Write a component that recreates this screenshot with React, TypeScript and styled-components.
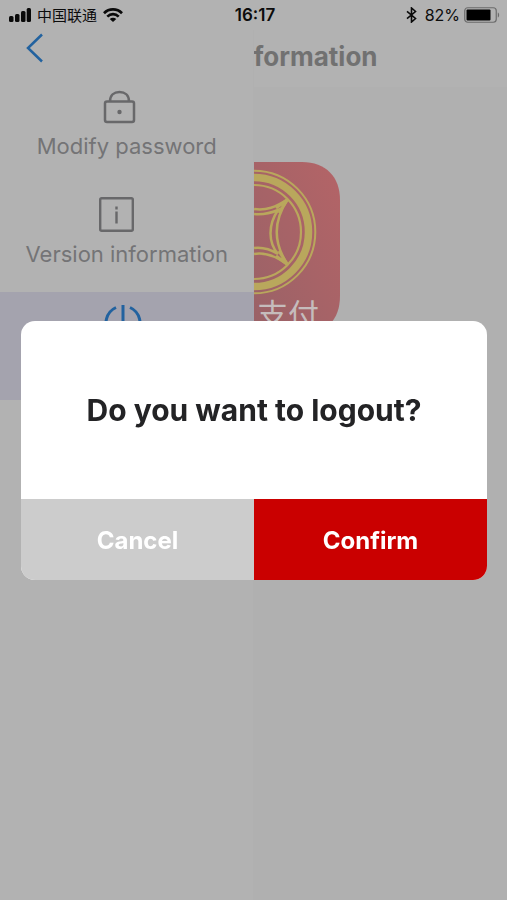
import React from "react";
import styled, { createGlobalStyle } from "styled-components";

const GlobalStyle = createGlobalStyle`
  * { box-sizing: border-box; }
  body { margin: 0; background: #b1b1b1; font-family: Inter, "Noto Sans", sans-serif; }
  button { font-family: inherit; border: 0; padding: 0; cursor: pointer; }
  svg { display: block; }
`;

const Screen = styled.div`
  min-height: 100vh;
  display: flex;
  flex-direction: column;
  background: linear-gradient(90deg, #b2b2b2 50%, #b0b0b0 50%);
`;

const StatusBar = styled.header`
  height: 30px;
  padding: 0 6px 0 9px;
  display: grid;
  grid-template-columns: 1fr auto 1fr;
  align-items: center;
  color: #0c0c0c;
  font-size: 16px;
  line-height: 20px;
  background: #b2b2b2;
`;

const StatusGroup = styled.div<{ $end?: boolean }>`
  display: flex;
  align-items: center;
  gap: ${(p) => (p.$end ? "4px" : "6px")};
  justify-content: ${(p) => (p.$end ? "flex-end" : "flex-start")};
`;

const Carrier = styled.span`
  font-family: "Noto Sans CJK SC", sans-serif;
  font-size: 15px;
  font-weight: 400;
`;

const Time = styled.time`
  font-size: 17px;
  font-weight: 600;
`;

const Percent = styled.span`
  padding-left: 4px;
`;

const Panes = styled.div`
  flex: 1;
  display: grid;
  grid-template-columns: 1fr 1fr;
`;

const Drawer = styled.nav`
  min-width: 0;
`;

const BackButton = styled.button`
  display: flex;
  height: 46px;
  width: 60px;
  padding: 3px 0 0 25px;
  background: transparent;
`;

const MenuItem = styled.button<{ $active?: boolean }>`
  width: 100%;
  height: 108px;
  padding-top: 12px;
  display: flex;
  flex-direction: column;
  align-items: center;
  gap: 8px;
  font-size: 22px;
  line-height: 28px;
  white-space: nowrap;
  color: ${(p) => (p.$active ? "#22629f" : "#747476")};
  background: ${(p) => (p.$active ? "#a4a3ae" : "transparent")};
`;

const Content = styled.main`
  min-width: 0;
  overflow: hidden;
`;

const TitleBar = styled.div`
  height: 57px;
  padding-bottom: 4px;
  display: flex;
  align-items: center;
  background: #b2b2b2;
`;

const Title = styled.h1`
  margin: 0;
  font-size: 26px;
  line-height: 30px;
  font-weight: 700;
  color: #717171;
`;

const LogoArea = styled.div`
  padding-top: 75px;
`;

const ModalLayer = styled.div`
  position: fixed;
  inset: 0;
  padding: 1px 20px 0 21px;
  display: flex;
  align-items: center;
`;

const Dialog = styled.section`
  width: 100%;
  border-radius: 14px;
  overflow: hidden;
  background: #fff;
`;

const Question = styled.h2`
  margin: 0;
  padding: 72px 16px;
  font-size: 30px;
  line-height: 34px;
  font-weight: 700;
  text-align: center;
  color: #232325;
`;

const Actions = styled.div`
  display: grid;
  grid-template-columns: 1fr 1fr;
`;

const ActionButton = styled.button<{ $primary?: boolean }>`
  height: 81px;
  padding-top: 2px;
  font-size: 24px;
  line-height: 30px;
  font-weight: 700;
  color: #fff;
  background: ${(p) => (p.$primary ? "#ca0000" : "#cccccc")};
`;

const SignalIcon = () => (
  <svg width="22" height="14" viewBox="0 0 22 14" fill="#0a0a0a" aria-hidden="true">
    <rect x="0" y="8" width="4.500" height="6" rx="1.500" />
    <rect x="6" y="6" width="4.500" height="8" rx="1.500" />
    <rect x="12" y="3" width="4.500" height="11" rx="1.500" />
    <rect x="17.700" y="0" width="4.300" height="14" rx="1.500" />
  </svg>
);

const WifiIcon = () => (
  <svg width="20" height="14" viewBox="0 0 20 14" fill="none" stroke="#0a0a0a" strokeWidth="2.7" aria-hidden="true">
    <path d="M1 5.2C6 .2 14 .2 19 5.2M4.3 8.6c3.3-3.2 8.1-3.2 11.4 0" />
    <path d="M6.7 10.9c2-1.7 4.6-1.7 6.6 0L10 14z" fill="#0a0a0a" stroke="none" />
  </svg>
);

const BluetoothIcon = () => (
  <svg width="11" height="16" viewBox="0 0 11 16" fill="none" stroke="#0a0a0a" strokeWidth="1.6" aria-hidden="true">
    <path d="M1 4.3 9.5 11.5 5.5 15V1l4 3.5L1 11.7" />
  </svg>
);

const BatteryIcon = () => (
  <svg width="37" height="16" viewBox="0 0 37 16" aria-hidden="true">
    <rect x=".75" y=".75" width="31.5" height="14.5" rx="3" fill="none" stroke="#6b6b6b" strokeWidth="1.2" />
    <rect x="2.5" y="2.5" width="24" height="11" rx="1" fill="#000" />
    <path d="M33.8 5.5c1.8.6 1.8 4.4 0 5z" fill="#6b6b6b" />
  </svg>
);

const LockIcon = () => (
  <svg width="56" height="36" viewBox="0 0 56 36" fill="none" stroke="#68686a" strokeWidth="2.5" aria-hidden="true">
    <rect x="6" y="13.5" width="29" height="20.5" rx="2" />
    <path d="M11 13.5C11 7.5 15 4 20.5 4S30 7.500 30 13.5" />
    <circle cx="20.500" cy="24" r="2.200" fill="#68686a" stroke="none" />
  </svg>
);

const InfoIcon = () => (
  <svg width="56" height="36" viewBox="0 0 56 36" fill="none" stroke="#68686a" strokeWidth="2.4" aria-hidden="true">
    <rect x="1.200" y="2.200" width="32.600" height="32.600" rx="1.500" />
    <path d="M17.500 15.500v12M17.500 10.500v3" />
  </svg>
);

const PowerIcon = () => (
  <svg width="56" height="36" viewBox="0 0 56 36" fill="none" stroke="#22629f" strokeWidth="3" aria-hidden="true">
    <path d="M24 1v20M17 3.500a17 17 0 1 0 14 0" />
  </svg>
);

const AppLogo = () => (
  <svg width="86" height="172" viewBox="0 0 86 172" role="img" aria-label="支付">
    <defs>
      <linearGradient id="tile" x1="1" y1="0" x2="0" y2="1">
        <stop offset="0" stopColor="#b46467" />
        <stop offset="1" stopColor="#996267" />
      </linearGradient>
    </defs>
    <path d="M0 0h48c24 0 38 15 38 38v96c0 24-14 38-38 38H0z" fill="url(#tile)" />
    <g fill="none" stroke="#b9a75c">
      <circle cx="0" cy="70" r="54.500" strokeWidth="7.500" />
      <circle cx="0" cy="70" r="61.300" strokeWidth="2" />
      <circle cx="0" cy="70" r="47" strokeWidth="2.200" />
      <path d="M0 47C12 49 22 45 34 37C19 59 19 81 34 103C22 94 12 90 0 92" strokeWidth="2.500" />
      <path d="M0 52C9 53 17 51 24 48C14 63 14 80 24 92C16 87 8 85 0 86" strokeWidth="2.500" />
      <path d="M22 46 33 38 25 51M22 94l11 8-8-13" strokeWidth="3" />
    </g>
    <text x="3" y="164" fontSize="31" fontWeight="400" fill="#c5bcbc" fontFamily="'Noto Sans CJK SC', sans-serif">
      支付
    </text>
  </svg>
);

export default function App() {
  return (
    <>
      <GlobalStyle />
      <Screen>
        <StatusBar>
          <StatusGroup>
            <SignalIcon />
            <Carrier lang="zh-CN">中国联通</Carrier>
            <WifiIcon />
          </StatusGroup>
          <Time>16:17</Time>
          <StatusGroup $end>
            <BluetoothIcon />
            <Percent>82%</Percent>
            <BatteryIcon />
          </StatusGroup>
        </StatusBar>
        <Panes>
          <Drawer>
            <BackButton aria-label="Back">
              <svg width="19" height="30" viewBox="0 0 19 30" fill="none" stroke="#22629f" strokeWidth="2.5" aria-hidden="true">
                <path d="M17 1.500 3 15l14 13.500" />
              </svg>
            </BackButton>
            <MenuItem>
              <LockIcon />
              Modify password
            </MenuItem>
            <MenuItem>
              <InfoIcon />
              Version information
            </MenuItem>
            <MenuItem $active aria-label="Logout">
              <PowerIcon />
            </MenuItem>
          </Drawer>
          <Content>
            <TitleBar>
              <Title>formation</Title>
            </TitleBar>
            <LogoArea>
              <AppLogo />
            </LogoArea>
          </Content>
        </Panes>
      </Screen>
      <ModalLayer>
        <Dialog role="dialog" aria-modal="true" aria-labelledby="logout-question">
          <Question id="logout-question">Do you want to logout?</Question>
          <Actions>
            <ActionButton>Cancel</ActionButton>
            <ActionButton $primary>Confirm</ActionButton>
          </Actions>
        </Dialog>
      </ModalLayer>
    </>
  );
}
